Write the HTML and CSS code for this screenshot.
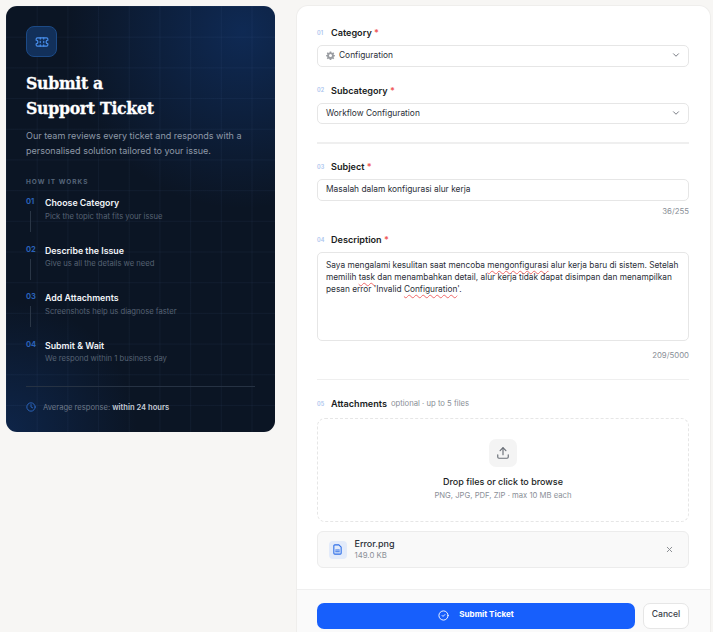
FILE: index.html
```html
<!DOCTYPE html>
<html>

<head>
  <title>Submit a Support Ticket</title>
  <link rel="stylesheet" href="styles.css">
</head>

<body>
  <div class="page">
    <!-- Panel izquierdo -->
    <aside class="panel">
      <div class="panel-icon">
        <svg viewBox="0 0 24 24" width="14" height="14" fill="none" stroke="#4a90ee" stroke-width="2" stroke-linecap="round" stroke-linejoin="round">
          <path d="M2 9a3 3 0 0 1 0 6v2a2 2 0 0 0 2 2h16a2 2 0 0 0 2-2v-2a3 3 0 0 1 0-6V7a2 2 0 0 0-2-2H4a2 2 0 0 0-2 2Z" />
          <path d="M9 5v2M9 17v2M9 11v2M15 5v2M15 17v2M15 11v2" />
        </svg>
      </div>
      <h1>Submit a<br>Support Ticket</h1>
      <p class="panel-text">Our team reviews every ticket and responds with a personalised solution tailored to your issue.</p>
      <div class="how">HOW IT WORKS</div>

      <div class="step">
        <div class="step-side"><span class="step-num">01</span><span class="step-line"></span></div>
        <div>
          <div class="step-title">Choose Category</div>
          <div class="step-sub">Pick the topic that fits your issue</div>
        </div>
      </div>
      <div class="step">
        <div class="step-side"><span class="step-num">02</span><span class="step-line"></span></div>
        <div>
          <div class="step-title">Describe the Issue</div>
          <div class="step-sub">Give us all the details we need</div>
        </div>
      </div>
      <div class="step">
        <div class="step-side"><span class="step-num">03</span><span class="step-line"></span></div>
        <div>
          <div class="step-title">Add Attachments</div>
          <div class="step-sub">Screenshots help us diagnose faster</div>
        </div>
      </div>
      <div class="step">
        <div class="step-side"><span class="step-num">04</span></div>
        <div>
          <div class="step-title">Submit &amp; Wait</div>
          <div class="step-sub">We respond within 1 business day</div>
        </div>
      </div>

      <div class="panel-foot">
        <svg viewBox="0 0 24 24" width="10" height="10" fill="none" stroke="#2f6fd0" stroke-width="2" stroke-linecap="round" stroke-linejoin="round">
          <circle cx="12" cy="12" r="10" />
          <path d="M12 6v6l4 2" />
        </svg>
        <span>Average response: <b>within 24 hours</b></span>
      </div>
    </aside>

    <!-- Formulario -->
    <main class="card">
      <div class="form">
        <div class="label-row"><span class="num">01</span><label>Category <em>*</em></label></div>
        <div class="field select">
          <svg class="gear" viewBox="0 0 24 24" width="9" height="9" fill="#9a9da2">
            <path fill-rule="evenodd" d="M10 1h4l.6 3.200 1.900.8L19.200 3.200 22 6l-1.800 2.700.8 1.900L24 11v3l-3 .6-.8 1.900L22 19l-3 3-2.500-1.800-1.900.8L14 24h-4l-.6-3-1.900-.8L5 22l-3-3 1.800-2.500-.8-1.900L0 14v-3l3-.4.800-1.900L2 6l2.800-2.800L7.500 5l1.900-.8ZM12 8a4 4 0 1 0 0 8 4 4 0 0 0 0-8Z" />
          </svg>
          <span>Configuration</span>
          <svg class="chev" viewBox="0 0 24 24" width="10" height="10" fill="none" stroke="#6b7078" stroke-width="2.200" stroke-linecap="round" stroke-linejoin="round"><path d="m6 9 6 6 6-6" /></svg>
        </div>

        <div class="label-row second"><span class="num">02</span><label>Subcategory <em>*</em></label></div>
        <div class="field select">
          <span>Workflow Configuration</span>
          <svg class="chev" viewBox="0 0 24 24" width="10" height="10" fill="none" stroke="#6b7078" stroke-width="2.200" stroke-linecap="round" stroke-linejoin="round"><path d="m6 9 6 6 6-6" /></svg>
        </div>

        <hr class="sep first-sep">

        <div class="label-row"><span class="num">03</span><label>Subject <em>*</em></label></div>
        <div class="field"><span>Masalah dalam konfigurasi alur kerja</span></div>
        <div class="count">36/255</div>

        <div class="label-row desc-label"><span class="num">04</span><label>Description <em>*</em></label></div>
        <div class="field area">
          <div>Saya mengalami kesulitan saat mencoba <u>mengonfigurasi</u> alur kerja baru di sistem. Setelah</div>
          <div>memilih <u>task</u> dan menambahkan detail, alur kerja tidak dapat disimpan dan menampilkan</div>
          <div>pesan error 'Invalid <u>Configuration</u>'.</div>
        </div>
        <div class="count area-count">209/5000</div>

        <hr class="sep second-sep">

        <div class="label-row attach-label"><span class="num">05</span><label>Attachments</label><span class="optional">optional · up to 5 files</span></div>
        <div class="drop">
          <div class="drop-icon">
            <svg viewBox="0 0 24 24" width="14" height="14" fill="none" stroke="#6b7078" stroke-width="2" stroke-linecap="round" stroke-linejoin="round">
              <path d="M21 15v4a2 2 0 0 1-2 2H5a2 2 0 0 1-2-2v-4" />
              <path d="m17 8-5-5-5 5" />
              <path d="M12 3v12" />
            </svg>
          </div>
          <div class="drop-title">Drop files or click to browse</div>
          <div class="drop-sub">PNG, JPG, PDF, ZIP · max 10 MB each</div>
        </div>

        <div class="file">
          <div class="file-icon">
            <svg viewBox="0 0 24 24" width="11" height="11" fill="none" stroke="#2f6fe8" stroke-width="2.400" stroke-linecap="round" stroke-linejoin="round">
              <path d="M15 2H6a2 2 0 0 0-2 2v16a2 2 0 0 0 2 2h12a2 2 0 0 0 2-2V7Z" />
              <path d="M8 13h8M8 17h8" />
            </svg>
          </div>
          <div class="file-info">
            <div class="file-name">Error.png</div>
            <div class="file-size">149.0 KB</div>
          </div>
          <svg viewBox="0 0 24 24" width="9" height="9" fill="none" stroke="#8a8d92" stroke-width="2.600" stroke-linecap="round"><path d="M18 6 6 18M6 6l12 12" /></svg>
        </div>
      </div>

      <div class="actions">
        <button class="submit">
          <svg viewBox="0 0 24 24" width="11" height="11" fill="none" stroke="#fff" stroke-width="2" stroke-linecap="round" stroke-linejoin="round">
            <circle cx="12" cy="12" r="10" />
            <path d="m9 12 2 2 4-4" />
          </svg>
          <span>Submit Ticket</span>
        </button>
        <button class="cancel">Cancel</button>
      </div>
    </main>
  </div>
</body>

</html>
```
FILE: styles.css
```css
html,
body {
  margin: 0;
  height: 632px;
  overflow: hidden;
}

body {
  background-color: #f7f6f4;
  font-family: "Inter", "Liberation Sans", sans-serif;
  color: #1a1d23;
}

.page {
  display: flex;
  align-items: flex-start;
  gap: 22px;
  padding: 6px 3px 0 6px;
}

/* Panel izquierdo */
.panel {
  width: 269px;
  height: 426px;
  flex-shrink: 0;
  box-sizing: border-box;
  padding: 20px 20px 0;
  border-radius: 11px;
  color: #fff;
  background-color: #0b1524;
  background-image:
    linear-gradient(rgba(120, 160, 220, 0.055) 1px, transparent 1px),
    linear-gradient(90deg, rgba(120, 160, 220, 0.055) 1px, transparent 1px),
    radial-gradient(circle at 88% 6%, rgba(20, 70, 150, 0.42), transparent 38%),
    radial-gradient(circle at 0% 100%, rgba(20, 70, 150, 0.32), transparent 26%);
  background-size: 30.7px 30.7px, 30.7px 30.7px, 100% 100%, 100% 100%;
}

.panel-icon {
  width: 31px;
  height: 31px;
  box-sizing: border-box;
  border: 1px solid #1c4a86;
  border-radius: 8px;
  background-color: #12305a;
  display: flex;
  align-items: center;
  justify-content: center;
}

h1 {
  margin: 14px 0 0;
  font-family: "DejaVu Serif Condensed", "DejaVu Serif", serif;
  font-weight: 700;
  font-size: 17.500px;
  line-height: 24.500px;
  letter-spacing: -0.3px;
  -webkit-text-stroke: 0.3px #fff;
  color: #fff;
}

.panel-text {
  margin: 9px 0 0;
  font-size: 9.030px;
  line-height: 14.500px;
  color: #8e99a8;
}

.how {
  margin-top: 19.500px;
  font-size: 6.500px;
  line-height: 8px;
  font-weight: 700;
  letter-spacing: 1px;
  color: #56657a;
}

.step {
  display: flex;
  gap: 10px;
  height: 47.500px;
}

.how + .step {
  margin-top: 11.500px;
}

.step-side {
  width: 9px;
  display: flex;
  flex-direction: column;
}

.step-num {
  font-size: 7.500px;
  line-height: 10px;
  font-weight: 700;
  color: #2a62ba;
}

.step-line {
  width: 1px;
  height: 21px;
  margin: 4px 0 0 4px;
  background-color: #2a3646;
}

.step-title {
  font-size: 8.800px;
  line-height: 12px;
  font-weight: 600;
  color: #f1f4f8;
}

.step-sub {
  margin-top: 2.500px;
  font-size: 7.650px;
  line-height: 10px;
  color: #566273;
}

.panel-foot {
  margin-top: -1.500px;
  width: 229px;
  padding-top: 15px;
  border-top: 1px solid #263243;
  display: flex;
  align-items: center;
  gap: 7px;
  font-size: 7.600px;
  line-height: 11px;
  color: #6c7888;
}

.panel-foot b {
  font-weight: 600;
  color: #c4ccd6;
}

/* Tarjeta del formulario */
.card {
  flex: 1;
  height: 640px;
  border-radius: 11px 11px 0 0;
  background-color: #fff;
  box-shadow: 0 0 0 1px #efeeec;
}

.form {
  height: 583px;
  box-sizing: border-box;
  padding: 20.500px 21px 0 20px;
}

.label-row {
  display: flex;
  align-items: center;
  height: 12px;
  margin-bottom: 6.500px;
}

.second {
  margin-top: 17.500px;
}

.desc-label {
  margin-top: 18px;
}

.attach-label {
  margin-bottom: 8.300px;
}

.num {
  width: 14px;
  font-size: 5.500px;
  font-weight: 600;
  color: #a9c3ee;
}

label {
  font-size: 9.100px;
  font-weight: 600;
  color: #1a1d23;
}

label em {
  font-style: normal;
  color: #ef5a5a;
}

.optional {
  margin-left: 4px;
  font-size: 7.700px;
  color: #8a8f97;
}

.field {
  height: 21.500px;
  box-sizing: border-box;
  border: 1.500px solid #e6e6e6;
  border-radius: 5px;
  padding: 0 8px 1px;
  display: flex;
  align-items: center;
  font-size: 8.400px;
  color: #2b2f38;
  background-color: #fff;
}

.gear {
  margin: 0 4px 0 0;
}

.chev {
  margin-left: auto;
  margin-right: -1px;
}

.area {
  height: 89px;
  display: block;
  padding: 6px 6px 6px 8px;
  font-size: 8.300px;
  line-height: 12px;
  white-space: nowrap;
}

.area u {
  text-decoration: underline wavy #ef6a6a 1px;
  text-underline-offset: 2px;
}

.count {
  margin-top: 5px;
  text-align: right;
  font-size: 7.800px;
  line-height: 10px;
  color: #8a8f97;
}

.area-count {
  margin-top: 8.700px;
}

.sep {
  margin: 0;
  border: 0;
  height: 1.500px;
  background-color: #efefef;
}

.first-sep {
  margin: 18px 0 17px;
}

.second-sep {
  margin: 19px 0 17.500px;
}

.drop {
  height: 104px;
  box-sizing: border-box;
  border: 1.500px dashed #e6e6e6;
  border-radius: 8px;
  padding-top: 20.500px;
  display: flex;
  flex-direction: column;
  align-items: center;
}

.drop-icon {
  width: 28px;
  height: 28px;
  border-radius: 7px;
  background-color: #f4f4f4;
  display: flex;
  align-items: center;
  justify-content: center;
}

.drop-title {
  margin-top: 8.500px;
  font-size: 9px;
  line-height: 12px;
  font-weight: 500;
  color: #1a1d23;
}

.drop-sub {
  margin-top: 3px;
  font-size: 7.700px;
  line-height: 10px;
  color: #8a8f97;
}

.file {
  margin-top: 8.700px;
  height: 37.700px;
  box-sizing: border-box;
  border: 1.500px solid #ececec;
  border-radius: 6px;
  padding: 0 14px 0 10.500px;
  background-color: #f9f9f9;
  display: flex;
  align-items: center;
}

.file-icon {
  width: 18px;
  height: 18px;
  border-radius: 4px;
  background-color: #e3ebfa;
  display: flex;
  align-items: center;
  justify-content: center;
}

.file-info {
  margin-left: 8px;
  flex: 1;
}

.file-name {
  font-size: 9px;
  line-height: 12px;
  font-weight: 500;
  color: #2b2f38;
}

.file-size {
  font-size: 7.800px;
  line-height: 11px;
  color: #8a8f97;
}

/* Botones */
.actions {
  box-sizing: border-box;
  height: 57px;
  padding: 12.500px 21px 12.500px 20px;
  border-top: 1.500px solid #efefef;
  background-color: #fafafa;
  display: flex;
  gap: 8px;
}

button {
  font-family: inherit;
  height: 26px;
  cursor: pointer;
}

.submit {
  flex: 1;
  border: 0;
  border-radius: 7px;
  background-color: #175ffc;
  color: #fff;
  font-size: 8.100px;
  font-weight: 700;
  display: flex;
  align-items: center;
  justify-content: center;
  gap: 10px;
}

.submit span {
  margin-bottom: 3px;
}

.cancel {
  width: 46px;
  padding: 0 0 3px;
  border: 1.500px solid #e6e6e6;
  border-radius: 7px;
  background-color: #fff;
  color: #3a3f4a;
  font-size: 8.600px;
  font-weight: 500;
}
```
